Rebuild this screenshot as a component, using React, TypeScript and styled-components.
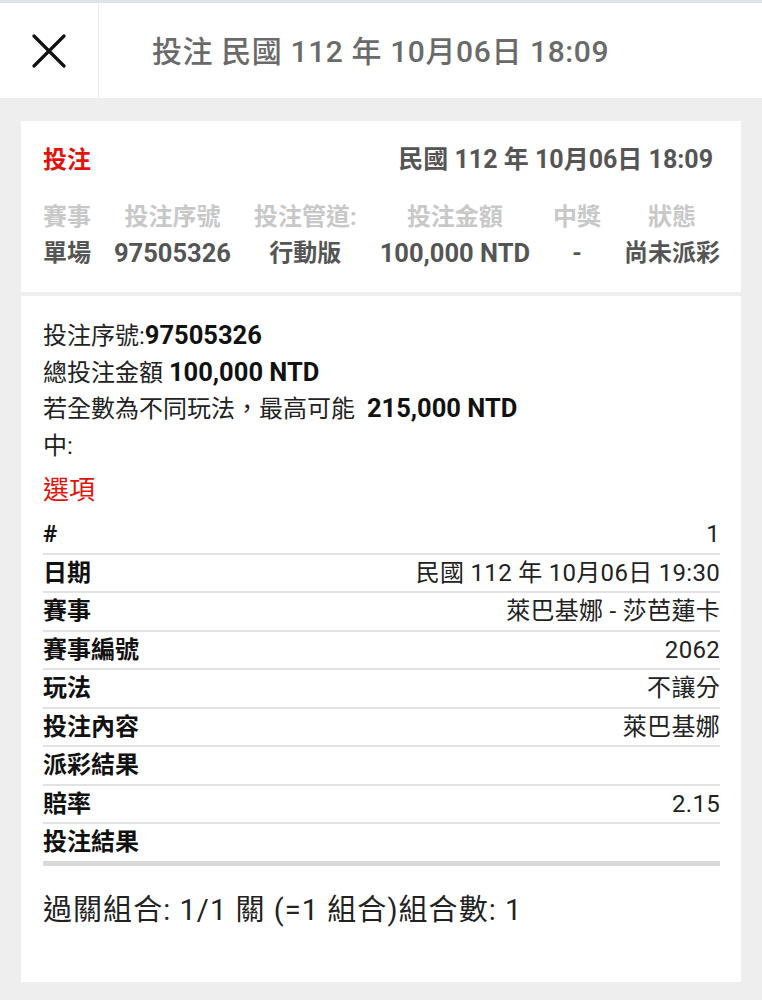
import React from 'react'
import styled, { createGlobalStyle } from 'styled-components'

const GlobalStyle = createGlobalStyle`
  html, body {
    margin: 0;
    padding: 0;
    background: #eeeeee;
    overflow: hidden;
  }
  body {
    font-family: Roboto, 'Noto Sans CJK TC', sans-serif;
  }
`

const Page = styled.div`
  width: 762px;
  min-height: 1000px;
  background: #eeeeee;
  display: flex;
  flex-direction: column;
`

const TopBar = styled.header`
  height: 95px;
  border-top: 3px solid #dfe3e8;
  background: #fff;
  display: flex;
  align-items: stretch;
`

const CloseCell = styled.button`
  width: 99px;
  padding: 0;
  border: none;
  border-right: 1px solid #ececec;
  background: transparent;
  display: flex;
  align-items: center;
  justify-content: center;
`

const TopTitle = styled.h1`
  margin: 0 0 4px;
  padding-left: 53px;
  display: flex;
  align-items: center;
  font-size: 30px;
  font-weight: 500;
  letter-spacing: 0.6px;
  color: #6a6a6a;
`

const Body = styled.main`
  padding: 23px 21px 18px;
  display: flex;
  flex-direction: column;
  gap: 4px;
`

const SummaryCard = styled.section`
  background: #fff;
  padding: 21px 21px 21px 22px;
`

const SummaryHead = styled.div`
  display: flex;
  justify-content: space-between;
  align-items: center;
  line-height: 36px;
`

const Tag = styled.span`
  font-size: 24px;
  font-weight: 700;
  color: #e3120b;
`

const DateText = styled.span`
  padding-right: 7px;
  font-size: 25px;
  font-weight: 700;
  color: #555;
`

const Columns = styled.div`
  margin-top: 21px;
  display: flex;
  justify-content: space-between;
`

const Column = styled.div`
  display: flex;
  flex-direction: column;
  align-items: center;
  font-size: 24px;
  font-weight: 700;
  line-height: 36px;
`

const ColHead = styled.span`
  color: #c8c8c8;
`

const ColValue = styled.span<{ $num?: boolean }>`
  height: 36px;
  color: #555;
  font-size: ${p => (p.$num ? '25.5px' : '24px')};
`

const DetailCard = styled.section`
  background: #fff;
  padding: 22px 21px 54px 22px;
`

const InfoLine = styled.div`
  height: 36.5px;
  font-size: 24px;
  line-height: 36.5px;
  color: #222;

  strong {
    font-size: 25.5px;
    line-height: 1;
    font-weight: 700;
    color: #111;
  }
`

const SectionTitle = styled.div`
  margin-top: 8px;
  font-size: 26px;
  line-height: 36px;
  color: #e3120b;
`

const Table = styled.div`
  margin-top: 8px;
`

const Row = styled.div<{ $last?: boolean }>`
  display: flex;
  justify-content: space-between;
  font-size: 24px;
  line-height: 36.5px;
  border-bottom: ${p => (p.$last ? '5px solid #dadada' : '2px solid #e2e2e2')};
`

const RowLabel = styled.span`
  font-weight: 700;
  color: #111;
`

const RowValue = styled.span`
  color: #222;
  letter-spacing: 0.3px;
`

const Footer = styled.div`
  margin-top: 26px;
  font-size: 29px;
  line-height: 36px;
  letter-spacing: 1.05px;
  color: #222;
`

const columns = [
  { head: '賽事', value: '單場' },
  { head: '投注序號', value: '97505326', num: true },
  { head: '投注管道:', value: '行動版' },
  { head: '投注金額', value: '100,000 NTD', num: true },
  { head: '中獎', value: '-' },
  { head: '狀態', value: '尚未派彩' },
]

const rows = [
  { label: '#', value: '1' },
  { label: '日期', value: '民國 112 年 10月06日 19:30' },
  { label: '賽事', value: '萊巴基娜 - 莎芭蓮卡' },
  { label: '賽事編號', value: '2062' },
  { label: '玩法', value: '不讓分' },
  { label: '投注內容', value: '萊巴基娜' },
  { label: '派彩結果', value: '' },
  { label: '賠率', value: '2.15' },
  { label: '投注結果', value: '' },
]

const CloseIcon = () => (
  <svg width='34' height='34' viewBox='0 0 34 34'>
    <path d='M2 2 L32 32 M32 2 L2 32' stroke='#111' strokeWidth='3.2' strokeLinecap='round' />
  </svg>
)

export default function App() {
  return (
    <>
      <GlobalStyle />
      <Page>
        <TopBar>
          <CloseCell aria-label='close'>
            <CloseIcon />
          </CloseCell>
          <TopTitle>投注 民國 112 年 10月06日 18:09</TopTitle>
        </TopBar>
        <Body>
          <SummaryCard>
            <SummaryHead>
              <Tag>投注</Tag>
              <DateText>民國 112 年 10月06日 18:09</DateText>
            </SummaryHead>
            <Columns>
              {columns.map(c => (
                <Column key={c.head}>
                  <ColHead>{c.head}</ColHead>
                  <ColValue $num={c.num}>{c.value}</ColValue>
                </Column>
              ))}
            </Columns>
          </SummaryCard>
          <DetailCard>
            <InfoLine>
              投注序號:<strong>97505326</strong>
            </InfoLine>
            <InfoLine>
              總投注金額 <strong>100,000 NTD</strong>
            </InfoLine>
            <InfoLine>
              若全數為不同玩法，最高可能&nbsp; <strong>215,000 NTD</strong>
            </InfoLine>
            <InfoLine>中:</InfoLine>
            <SectionTitle>選項</SectionTitle>
            <Table>
              {rows.map((r, i) => (
                <Row key={r.label} $last={i === rows.length - 1}>
                  <RowLabel>{r.label}</RowLabel>
                  <RowValue>{r.value}</RowValue>
                </Row>
              ))}
            </Table>
            <Footer>過關組合: 1/1 關 (=1 組合)組合數: 1</Footer>
          </DetailCard>
        </Body>
      </Page>
    </>
  )
}
